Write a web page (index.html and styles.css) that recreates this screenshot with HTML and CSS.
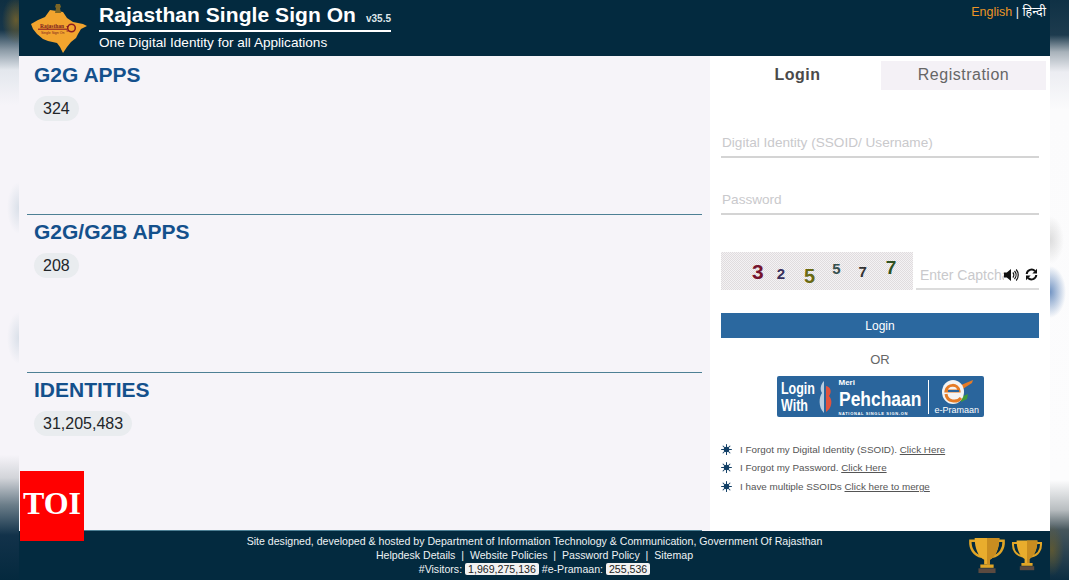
FILE: index.html
```html
<!DOCTYPE html>
<html lang="en">
<head>
<meta charset="utf-8">
<title>Rajasthan Single Sign On</title>
<link rel="stylesheet" href="styles.css">
</head>
<body>
<svg class="defs" width="0" height="0" aria-hidden="true">
  <symbol id="sun" viewBox="0 0 12 12">
    <g stroke="#123f66" stroke-width="1.1" stroke-linecap="round">
      <path d="M6 .6V11.4M.6 6H11.4M2.2 2.2l7.6 7.6M9.8 2.2l-7.6 7.6"/>
    </g>
    <circle cx="6" cy="6" r="3" fill="#123f66"/>
  </symbol>
  <symbol id="cup" viewBox="0 0 40 40">
    <path d="M8 5H2.500c-.5 8 3.500 15 12 17M32 5h5.500c.5 8-3.500 15-12 17" fill="none" stroke="#e0a526" stroke-width="2.600"/>
    <path d="M7 2h26c0 11-4 20-10 23v5h-6v-5C11 22 7 13 7 2z" fill="#e9ad2d"/>
    <path d="M20 2h13c0 11-4 20-10 23v5h-3z" fill="#c98d20"/>
    <rect x="13" y="30" width="14" height="3.500" fill="#e0a526"/>
    <rect x="11" y="34" width="18" height="5" fill="#5b4a40"/>
  </symbol>
</svg>
<div class="page">
  <div class="strip strip-left"></div>
  <div class="app">
    <header class="top">
      <svg class="logo" width="57" height="50" viewBox="30 3 57 50" aria-hidden="true">
        <path d="M31 24L38 20 45 17 50 10 57 11 63 12 67 18 73 22 83 24 87 26 81 29 78 34 76 38 71 42 67 47 63 53 60 47 57 43 48 41 43 39 37 34 33 29z" fill="#f2a42e"/>
        <path d="M56 4h4l1 3-1 1 1 5h-6l1-5-1-1z" fill="#7a6526"/>
        <path d="M38 29.200h29" stroke="#8a1c22" stroke-width="1.100"/>
        <circle cx="71.500" cy="28" r="3.800" fill="none" stroke="#8a1c22" stroke-width="1.500"/>
        <path d="M66.500 26.500h2M66.500 31h2" stroke="#8a1c22" stroke-width="1"/>
        <text class="logo-a" x="40" y="27.500">Rajasthan</text>
        <text class="logo-b" x="41" y="33.500">Single Sign On</text>
      </svg>
      <div class="brand">
        <div class="brand-title"><span class="brand-name">Rajasthan Single Sign On</span><span class="brand-ver">v35.5</span></div>
        <div class="brand-sub">One Digital Identity for all Applications</div>
      </div>
      <div class="lang"><span class="lang-on">English</span> | <span class="lang-hi">हिन्दी</span></div>
    </header>
    <div class="middle">
      <main class="stats">
        <section class="stat stat-first">
          <h2 class="stat-title">G2G APPS</h2>
          <span class="pill">324</span>
        </section>
        <section class="stat">
          <h2 class="stat-title">G2G/G2B APPS</h2>
          <span class="pill">208</span>
        </section>
        <section class="stat">
          <h2 class="stat-title">IDENTITIES</h2>
          <span class="pill">31,205,483</span>
        </section>
      </main>
      <aside class="panel">
        <div class="tabs">
          <div class="tab tab-on">Login</div>
          <div class="tab tab-off">Registration</div>
        </div>
        <form class="form">
          <input class="field" type="text" placeholder="Digital Identity (SSOID/ Username)">
          <input class="field field-pass" type="password" placeholder="Password">
          <div class="captcha-row">
            <div class="captcha">
              <span class="d d1">3</span><span class="d d2">2</span><span class="d d3">5</span><span class="d d4">5</span><span class="d d5">7</span><span class="d d6">7</span>
            </div>
            <div class="captcha-input">
              <input class="field-cap" type="text" placeholder="Enter Captcha">
              <svg class="ico" width="15" height="14" viewBox="0 0 15 14" aria-hidden="true">
                <path d="M0 4.500h2.800L7 1v12L2.800 9.500H0z" fill="#111"/>
                <path d="M8.800 4.500a3.500 3.500 0 0 1 0 5M10.500 3a6 6 0 0 1 0 8M12.200 1.500a8.500 8.500 0 0 1 0 11" fill="none" stroke="#111" stroke-width="1.200"/>
              </svg>
              <svg class="ico ico-r" width="13" height="13" viewBox="0 0 13 13" aria-hidden="true">
                <path d="M1.700 6A4.900 4.900 0 0 1 10 3" fill="none" stroke="#111" stroke-width="2"/>
                <path d="M12 .8V5.500H7.300z" fill="#111"/>
                <path d="M11.300 7A4.900 4.900 0 0 1 3 10" fill="none" stroke="#111" stroke-width="2"/>
                <path d="M1 12.200V7.500h4.700z" fill="#111"/>
              </svg>
            </div>
          </div>
          <button class="submit" type="button">Login</button>
          <div class="or">OR</div>
          <div class="pehchaan">
            <div class="pc-login">Login<br>With</div>
            <svg class="pc-mark" width="15" height="32" viewBox="0 0 15 32" aria-hidden="true">
              <path d="M6 0C2 4 2 9 4 12 1 16 0 26 6 32z" fill="#b9cde0"/>
              <path d="M8 5c5 1 6 6 3 10 4 4 3 12-3 16z" fill="#e2533e"/>
            </svg>
            <div class="pc-main">
              <span class="pc-meri">Meri</span>
              <span class="pc-name">Pehchaan</span>
              <span class="pc-tag">NATIONAL SINGLE SIGN-ON</span>
            </div>
            <div class="pc-rule"></div>
            <div class="pc-ep">
              <svg width="34" height="26" viewBox="0 0 34 26" aria-hidden="true">
                <path d="M14 9L33 1l-1 3-14 9z" fill="#e57b26"/>
                <path d="M21 18l7-3-1 5-6 3z" fill="#3f9a3a"/>
                <ellipse cx="13" cy="13" rx="11" ry="12" fill="#f4f4f4"/>
                <path d="M6 12C7 5 18 4 19 12zM6 15c1 8 11 9 15 4" fill="none" stroke="#e57b26" stroke-width="3"/>
                <path d="M8 12h11" stroke="#2a659c" stroke-width="2"/>
              </svg>
              <span class="pc-eptext">e-Pramaan</span>
            </div>
          </div>
          <ul class="help">
            <li class="help-item"><svg class="sun" width="11" height="11"><use href="#sun"/></svg><span>I Forgot my Digital Identity (SSOID). <a class="help-link">Click Here</a></span></li>
            <li class="help-item"><svg class="sun" width="11" height="11"><use href="#sun"/></svg><span>I Forgot my Password. <a class="help-link">Click Here</a></span></li>
            <li class="help-item"><svg class="sun" width="11" height="11"><use href="#sun"/></svg><span>I have multiple SSOIDs <a class="help-link">Click here to merge</a></span></li>
          </ul>
        </form>
      </aside>
    </div>
    <footer class="foot">
      <div class="foot-line">Site designed, developed &amp; hosted by Department of Information Technology &amp; Communication, Government Of Rajasthan</div>
      <div class="foot-line">Helpdesk Details&nbsp; |&nbsp; Website Policies&nbsp; |&nbsp; Password Policy&nbsp; |&nbsp; Sitemap</div>
      <div class="foot-line">#Visitors: <span class="count">1,969,275,136</span> #e-Pramaan: <span class="count">255,536</span></div>
      <div class="cups">
        <svg width="38" height="38"><use href="#cup"/></svg>
        <svg width="32" height="32"><use href="#cup"/></svg>
      </div>
    </footer>
  </div>
  <div class="strip strip-right"></div>
</div>
<div class="toi">TOI</div>
</body>
</html>
```

FILE: styles.css
```css
* { box-sizing: border-box; }
html, body { margin: 0; padding: 0; }
body { width: 1069px; height: 580px; overflow: hidden; font-family: "Liberation Sans", Arial, sans-serif; position: relative; background: #f6f4f9; }
.defs { position: absolute; }
.page { display: flex; height: 580px; }
.strip { width: 19px; flex: none; }
.strip-left {
  background:
    radial-gradient(ellipse 14px 24px at 16px 20px, rgba(130,105,40,.75), rgba(130,105,40,0)),
    radial-gradient(ellipse 12px 26px at 19px 208px, rgba(195,208,220,.55), rgba(195,208,220,0)),
    radial-gradient(ellipse 12px 26px at 19px 338px, rgba(195,208,220,.55), rgba(195,208,220,0)),
    linear-gradient(#0f2f42 0, #17364a 30px, #8b9aa6 50px, #e3e7ed 70px, #f6f4f9 105px, #f6f4f9 455px, #d2d4d9 478px, #6b7d89 505px, #12324a 535px, #04293e 580px);
}
.strip-right {
  background:
    radial-gradient(ellipse 16px 26px at 0 292px, rgba(90,130,185,.85), rgba(90,130,185,0)),
    radial-gradient(ellipse 14px 24px at 0 240px, rgba(200,200,200,.6), rgba(200,200,200,0)),
    radial-gradient(ellipse 12px 26px at 2px 550px, rgba(110,95,40,.7), rgba(110,95,40,0)),
    linear-gradient(#0f3145 0, #1d3b4e 35px, #a8b2ba 52px, #ecedf2 72px, #fbfbfc 110px, #fcfcfd 480px, #b8bdc0 510px, #46565c 530px, #0c2d42 580px);
}
.app { width: 1031px; flex: none; display: flex; flex-direction: column; }

.top { height: 56px; background: #032a3f; display: flex; padding: 3px 4px 0 11px; color: #fff; }
.logo { flex: none; }
.logo-a { font: bold 5.500px "Liberation Serif", serif; fill: #7a1a1e; }
.logo-b { font: 3.500px "Liberation Sans", sans-serif; fill: #7a1a1e; }
.brand { margin-left: 12px; width: 292px; }
.brand-title { height: 29px; border-bottom: 2px solid #fff; display: flex; align-items: baseline; justify-content: space-between; line-height: 24px; }
.brand-name { font-size: 21px; font-weight: bold; letter-spacing: .06px; }
.brand-ver { font-size: 10px; font-weight: bold; color: #dfe6ea; }
.brand-sub { font-size: 13.600px; line-height: 20px; margin-top: 1px; }
.lang { margin-left: auto; font-size: 12.500px; line-height: 18px; color: #e8edf0; }
.lang-on { color: #ec9526; }
.lang-hi { color: #fff; font-family: "Noto Sans", "DejaVu Sans", sans-serif; }

.middle { height: 475px; display: flex; }
.stats { width: 691px; flex: none; background: #f6f4f9; padding: 0 8px; display: grid; grid-template-rows: 159px 158px 158px; }
.stat { border-bottom: 1px solid #4d8095; padding: 4px 7px 0; }
.stat-first { padding-top: 6px; }
.stat-title { margin: 0 0 8px; font-size: 21px; line-height: 26px; font-weight: bold; color: #14508c; }
.pill { display: inline-block; height: 25px; line-height: 25px; padding: 0 9px; border-radius: 13px; background: #e9ecef; color: #212529; font-size: 16px; }

.panel { width: 340px; flex: none; background: #fff; }
.tabs { display: flex; padding-top: 5px; height: 34px; }
.tab { line-height: 28px; text-align: center; font-size: 16px; letter-spacing: .5px; }
.tab-on { width: 171px; padding-left: 4px; font-weight: bold; color: #4a4a4a; }
.tab-off { width: 165px; background: #f4f1f6; color: #666; }
.form { padding: 0 11px; display: flex; flex-direction: column; }
.field { width: 318px; height: 37px; margin-top: 31px; border: 0; border-bottom: 2px solid #d4d4d4; outline: 0; background: transparent; padding: 8px 0 0 1px; font: 13.600px "Liberation Sans", sans-serif; }
.field-pass { margin-top: 20px; }
.field::placeholder, .field-cap::placeholder { color: #c9c9cc; opacity: 1; }
.captcha-row { display: flex; margin-top: 37px; height: 38px; }
.captcha { width: 192px; height: 38px; display: flex; padding-left: 31px; background: repeating-conic-gradient(#e0dcde 0 25%, #f4f2f4 0 50%) 0 0 / 2px 2px; font-weight: bold; font-family: "Liberation Sans", sans-serif; }
.d { display: block; line-height: 1; }
.d1 { font-size: 21px; color: #75142e; margin-top: 9px; }
.d2 { font-size: 15px; color: #39305c; margin: 14px 0 0 13px; }
.d3 { font-size: 20px; color: #6a6a12; margin: 14px 0 0 19px; }
.d4 { font-size: 15px; color: #36504e; margin: 9px 0 0 17px; }
.d5 { font-size: 15px; color: #333; margin: 12px 0 0 18px; }
.d6 { font-size: 19px; color: #2f5122; margin: 6px 0 0 19px; }
.captcha-input { width: 123px; margin-left: 3px; display: flex; align-items: center; border-bottom: 2px solid #dcdcdc; padding-left: 4px; padding-top: 9px; }
.field-cap { width: 84px; flex: none; border: 0; outline: 0; background: transparent; padding: 0; font: 14px "Liberation Sans", sans-serif; }
.ico { flex: none; }
.ico-r { margin-left: 6px; }
.submit { margin-top: 23px; height: 25px; border: 0; padding: 0; background: #2b689f; color: #fff; font: 12px "Liberation Sans", sans-serif; }
.or { margin-top: 13px; text-align: center; font-size: 13px; line-height: 17px; color: #666; }
.pehchaan { align-self: center; margin-top: 8px; width: 207px; height: 41px; background: #2a659c; border-radius: 2px; display: flex; align-items: center; padding: 0 4px; color: #fff; }
.pc-login { font-weight: bold; font-size: 16px; line-height: 17px; width: 37px; transform: scaleX(.78); transform-origin: left center; white-space: nowrap; }
.pc-mark { flex: none; }
.pc-main { margin-left: 6px; width: 83px; display: flex; flex-direction: column; }
.pc-meri { font-size: 8px; line-height: 9px; font-weight: bold; }
.pc-name { font-weight: bold; font-size: 21px; line-height: 24px; white-space: nowrap; transform: scaleX(.83); transform-origin: left center; }
.pc-tag { font-size: 4px; line-height: 5px; font-weight: bold; letter-spacing: .65px; white-space: nowrap; }
.pc-rule { width: 1px; height: 34px; margin-left: 6px; background: #fff; flex: none; }
.pc-ep { flex: none; margin-left: 6px; display: flex; flex-direction: column; align-items: center; }
.pc-ep svg { display: block; }
.pc-eptext { font-size: 9px; line-height: 10px; }
.help { list-style: none; margin: 23px 0 0; padding: 0; }
.help-item { display: flex; align-items: center; height: 18.500px; font-size: 9.850px; color: #555; }
.sun { margin-right: 8px; flex: none; }
.help-link { text-decoration: underline; }

.foot { height: 49px; background: #032a3f; color: #eef2f4; font-size: 10.600px; text-align: center; padding-top: 3px; position: relative; }
.foot-line { line-height: 14px; white-space: nowrap; }
.count { background: #f2f2f2; color: #222; padding: 0 3px; border-radius: 2px; }
.cups { position: absolute; right: 7px; top: 5px; display: flex; align-items: center; gap: 5px; }
.cups svg { display: block; }

.toi { position: absolute; left: 20px; top: 471px; width: 64px; height: 70px; background: #f00; color: #fff; font: bold 32px/64px "Liberation Serif", serif; text-align: center; }
```
